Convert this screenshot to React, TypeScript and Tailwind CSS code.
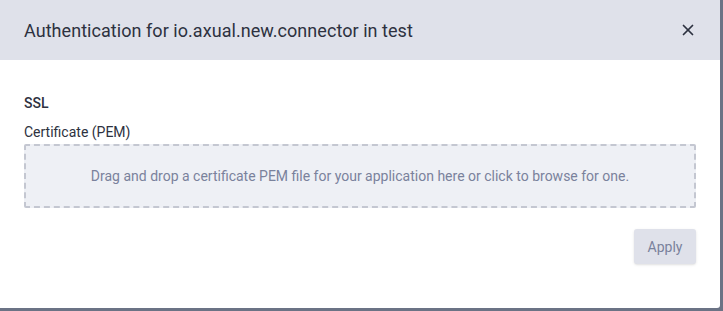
import { X } from "lucide-react";

function App() {
  return (
    <div className="w-full h-[311px] bg-[#6b7385] font-['Roboto',sans-serif]">
      <div className="w-[720px] h-[308px] bg-white rounded-br-[3px] flex flex-col">
        {/* Header */}
        <div className="h-[60px] bg-[#dfe1ea] flex items-center justify-between pl-6 pr-[23px]">
          <h2 className="text-[18px] text-[#2d3140] tracking-[0.05px]">
            Authentication for io.axual.new.connector in test
          </h2>
          <X className="w-[18px] h-[18px] text-[#2d3140]" strokeWidth={2.3} />
        </div>
        {/* Body */}
        <div className="flex flex-col px-6 pt-[33px]">
          <p className="text-sm font-medium text-[#2d3140] leading-5">SSL</p>
          <p className="text-sm text-[#2d3140] leading-5 mt-[9px]">Certificate (PEM)</p>
          <div className="mt-[2px] h-16 bg-[#eef0f5] border-2 border-dashed border-[#c4c7d1] rounded-[2px] flex items-center justify-center">
            <span className="text-sm text-[#7a829c]">
              Drag and drop a certificate PEM file for your application here or click to browse for one.
            </span>
          </div>
          <div className="flex justify-end mt-[21px]">
            <button className="w-[62px] h-[35px] bg-[#dfe1ea] text-[#7a829c] text-sm rounded-[3px] shadow-sm">
              Apply
            </button>
          </div>
        </div>
      </div>
    </div>
  );
}

export default App;
